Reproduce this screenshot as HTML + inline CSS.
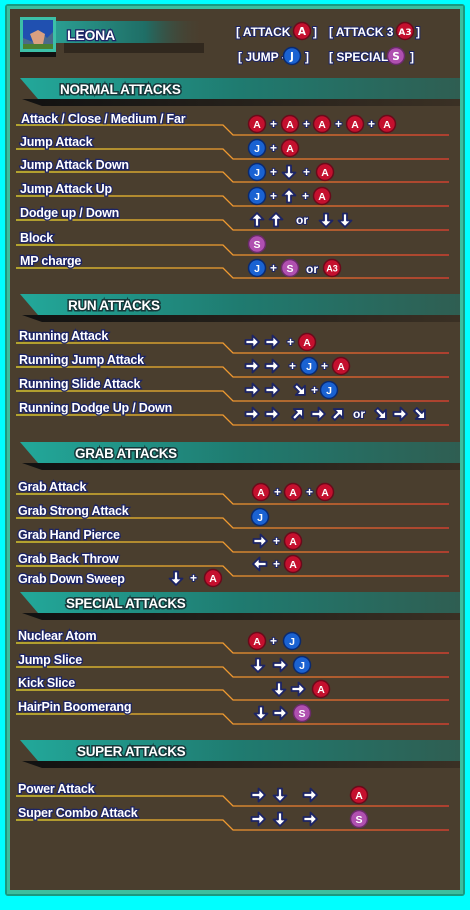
<!DOCTYPE html>
<html><head><meta charset="utf-8"><style>
html,body{margin:0;padding:0;background:#00ffff;width:470px;height:910px;overflow:hidden}
svg{display:block}
text{font-family:"Liberation Sans",sans-serif;font-weight:bold}
.l{fill:#fff;stroke:#1c2466;stroke-width:2.4px;paint-order:stroke;font-size:12.5px;letter-spacing:-0.2px}
.h{fill:#fff;stroke:#16383a;stroke-width:3px;paint-order:stroke;font-size:13.5px;letter-spacing:-0.3px}
.p{fill:#fff;stroke:#1c2466;stroke-width:2px;paint-order:stroke;font-size:12px}
.bt{fill:#fff;font-size:10.5px;text-anchor:middle;font-family:"DejaVu Sans",sans-serif}
</style></head><body>
<svg width="470" height="910" viewBox="0 0 470 910" xmlns="http://www.w3.org/2000/svg" xmlns:xlink="http://www.w3.org/1999/xlink">
<defs>
<linearGradient id="ln" x1="0" x2="1"><stop offset="0" stop-color="#f0e030"/><stop offset="0.45" stop-color="#f0a030"/><stop offset="1" stop-color="#e84030"/></linearGradient>
<linearGradient id="band" x1="0" x2="1"><stop offset="0" stop-color="#22a89a"/><stop offset="0.5" stop-color="#1f7b70"/><stop offset="1" stop-color="#2f5e52"/></linearGradient>
<linearGradient id="sh" x1="0" x2="1"><stop offset="0" stop-color="#111"/><stop offset="1" stop-color="#3a3024"/></linearGradient>
<linearGradient id="nm" x1="0" x2="1"><stop offset="0" stop-color="#2a9e92"/><stop offset="0.6" stop-color="#1f6e66"/><stop offset="1" stop-color="#4a3f2e" stop-opacity="0"/></linearGradient>
<path id="ar" d="M-6.5 -2H0.5V-6.5L7 0L0.5 6.5V2H-6.5Z" fill="#fff" stroke="#1c2466" stroke-width="1.8" stroke-linejoin="round"/>
</defs>
<rect x="5" y="4" width="460" height="892" rx="3" fill="#1a9a80"/>
<rect x="7" y="6" width="456" height="888" fill="#3cbf9e"/>
<rect x="10" y="9" width="450" height="881" fill="#4a3e2e"/>

<rect x="55" y="21" width="150" height="22" fill="url(#nm)"/>
<rect x="64" y="43" width="140" height="10" fill="#2a231a" opacity="0.8"/>
<rect x="20" y="17" width="36" height="35" fill="#3cc0a8"/>
<rect x="20" y="52" width="36" height="5" fill="#111"/>
<rect x="23" y="20" width="30" height="29" fill="#4a6a8a"/>
<path d="M23 20h30v12l-6 6-4-4-6 2-4 6-10-4z" fill="#2050b0"/>
<path d="M30 34l8-4 7 4-2 10-8 3z" fill="#d9a080"/>
<rect x="23" y="44" width="30" height="5" fill="#4a8030"/>
<text x="67" y="40" class="l" style="font-size:14px">LEONA</text>

<text x="236" y="36" class="p">[ ATTACK -</text>
<circle cx="302" cy="31" r="8.5" fill="#c4102e" stroke="#6a0a1a" stroke-width="1.5"/><text x="302" y="35" class="bt">A</text>
<text x="313" y="36" class="p">]</text>
<text x="329" y="36" class="p">[ ATTACK 3 -</text>
<circle cx="405" cy="31" r="8.5" fill="#c4102e" stroke="#6a0a1a" stroke-width="1.5"/><text x="405" y="35" class="bt" style="font-size:9px">A3</text>
<text x="416" y="36" class="p">]</text>
<text x="238" y="61" class="p">[ JUMP -</text>
<circle cx="292" cy="56" r="8.5" fill="#1a62d2" stroke="#0a2a70" stroke-width="1.5"/><text x="292" y="60" class="bt">J</text>
<text x="305" y="61" class="p">]</text>
<text x="329" y="61" class="p">[ SPECIAL -</text>
<circle cx="396" cy="56" r="8.5" fill="#b050b0" stroke="#6a2a6a" stroke-width="1.5"/><text x="396" y="60" class="bt">S</text>
<text x="410" y="61" class="p">]</text>

<g>
<path d="M22 99h438v7H42z" fill="url(#sh)"/><path d="M20 78h440v21H38z" fill="url(#band)"/><text x="60" y="94" class="h">NORMAL ATTACKS</text>
<path d="M22 315h438v7H42z" fill="url(#sh)"/><path d="M20 294h440v21H38z" fill="url(#band)"/><text x="68" y="310" class="h">RUN ATTACKS</text>
<path d="M22 463h438v7H42z" fill="url(#sh)"/><path d="M20 442h440v21H38z" fill="url(#band)"/><text x="75" y="458" class="h">GRAB  ATTACKS</text>
<path d="M22 613h438v7H42z" fill="url(#sh)"/><path d="M20 592h440v21H38z" fill="url(#band)"/><text x="66" y="608" class="h">SPECIAL  ATTACKS</text>
<path d="M22 761h438v7H42z" fill="url(#sh)"/><path d="M20 740h440v21H38z" fill="url(#band)"/><text x="77" y="756" class="h">SUPER  ATTACKS</text>
</g>

<g fill="none" stroke="url(#ln)" stroke-width="1.3">
<path d="M16 125H223l10 10H449"/><path d="M16 149H223l10 10H449"/><path d="M16 172H223l10 10H449"/><path d="M16 196H223l10 10H449"/><path d="M16 220H223l10 10H449"/><path d="M16 245H223l10 10H449"/><path d="M16 268H223l10 10H449"/>
<path d="M16 343H223l10 10H449"/><path d="M16 367H223l10 10H449"/><path d="M16 391H223l10 10H449"/><path d="M16 415H223l10 10H449"/>
<path d="M16 494H223l10 10H449"/><path d="M16 518H223l10 10H449"/><path d="M16 542H223l10 10H449"/><path d="M16 566H223l10 10H449"/>
<path d="M16 643H223l10 10H449"/><path d="M16 667H223l10 10H449"/><path d="M16 690H223l10 10H449"/><path d="M16 714H223l10 10H449"/>
<path d="M16 796H223l10 10H449"/><path d="M16 820H223l10 10H449"/>
</g>

<g>
<text x="21" y="123" class="l">Attack / Close / Medium / Far</text>
<text x="20" y="146" class="l">Jump Attack</text>
<text x="20" y="169" class="l">Jump Attack Down</text>
<text x="20" y="193" class="l">Jump Attack Up</text>
<text x="20" y="217" class="l">Dodge up  / Down</text>
<text x="20" y="242" class="l">Block</text>
<text x="20" y="265" class="l">MP charge</text>
<text x="19" y="340" class="l">Running Attack</text>
<text x="19" y="364" class="l">Running Jump Attack</text>
<text x="19" y="388" class="l">Running Slide Attack</text>
<text x="19" y="412" class="l">Running Dodge Up / Down</text>
<text x="18" y="491" class="l">Grab Attack</text>
<text x="18" y="515" class="l">Grab Strong Attack</text>
<text x="18" y="539" class="l">Grab Hand Pierce</text>
<text x="18" y="563" class="l">Grab Back Throw</text>
<text x="18" y="583" class="l">Grab Down Sweep</text>
<text x="18" y="640" class="l">Nuclear Atom</text>
<text x="18" y="664" class="l">Jump Slice</text>
<text x="18" y="687" class="l">Kick Slice</text>
<text x="18" y="711" class="l">HairPin Boomerang</text>
<text x="18" y="793" class="l">Power Attack</text>
<text x="18" y="817" class="l">Super Combo Attack</text>
</g>

<g fill="#c4102e" stroke="#6a0a1a" stroke-width="1.5">
<circle cx="257" cy="124" r="8.5"/><circle cx="290" cy="124" r="8.5"/><circle cx="322" cy="124" r="8.5"/><circle cx="355" cy="124" r="8.5"/><circle cx="387" cy="124" r="8.5"/>
<circle cx="290" cy="148" r="8.5"/><circle cx="325" cy="172" r="8.5"/><circle cx="322" cy="196" r="8.5"/><circle cx="332" cy="268" r="8.5"/>
<circle cx="307" cy="342" r="8.5"/><circle cx="341" cy="366" r="8.5"/>
<circle cx="261" cy="492" r="8.5"/><circle cx="293" cy="492" r="8.5"/><circle cx="325" cy="492" r="8.5"/>
<circle cx="293" cy="541" r="8.5"/><circle cx="293" cy="564" r="8.5"/><circle cx="213" cy="578" r="8.5"/>
<circle cx="257" cy="641" r="8.5"/><circle cx="321" cy="689" r="8.5"/><circle cx="359" cy="795" r="8.5"/>
</g>
<g fill="#1a62d2" stroke="#0a2a70" stroke-width="1.5">
<circle cx="257" cy="148" r="8.5"/><circle cx="257" cy="172" r="8.5"/><circle cx="257" cy="196" r="8.5"/><circle cx="257" cy="268" r="8.5"/>
<circle cx="309" cy="366" r="8.5"/><circle cx="329" cy="390" r="8.5"/>
<circle cx="260" cy="517" r="8.5"/><circle cx="292" cy="641" r="8.5"/><circle cx="302" cy="665" r="8.5"/>
</g>
<g fill="#b050b0" stroke="#6a2a6a" stroke-width="1.5">
<circle cx="257" cy="244" r="8.5"/><circle cx="290" cy="268" r="8.5"/><circle cx="302" cy="713" r="8.5"/><circle cx="359" cy="819" r="8.5"/>
</g>
<g class="bt">
<text x="257" y="128">A</text><text x="290" y="128">A</text><text x="322" y="128">A</text><text x="355" y="128">A</text><text x="387" y="128">A</text>
<text x="290" y="152">A</text><text x="325" y="176">A</text><text x="322" y="200">A</text><text x="332" y="271.5" style="font-size:9px">A3</text>
<text x="307" y="346">A</text><text x="341" y="370">A</text>
<text x="261" y="496">A</text><text x="293" y="496">A</text><text x="325" y="496">A</text>
<text x="293" y="545">A</text><text x="293" y="568">A</text><text x="213" y="582">A</text>
<text x="257" y="645">A</text><text x="321" y="693">A</text><text x="359" y="799">A</text>
<text x="257" y="152">J</text><text x="257" y="176">J</text><text x="257" y="200">J</text><text x="257" y="272">J</text>
<text x="309" y="370">J</text><text x="329" y="394">J</text>
<text x="260" y="521">J</text><text x="292" y="645">J</text><text x="302" y="669">J</text>
<text x="257" y="248">S</text><text x="290" y="272">S</text><text x="302" y="717">S</text><text x="359" y="823">S</text>
</g>
<g class="p">
<text x="270" y="128">+</text><text x="303" y="128">+</text><text x="335" y="128">+</text><text x="368" y="128">+</text>
<text x="270" y="152">+</text><text x="270" y="176">+</text><text x="303" y="176">+</text><text x="270" y="200">+</text><text x="302" y="200">+</text>
<text x="296" y="224">or</text><text x="270" y="272">+</text><text x="306" y="273">or</text>
<text x="287" y="346">+</text><text x="289" y="370">+</text><text x="321" y="370">+</text><text x="311" y="394">+</text><text x="353" y="418">or</text>
<text x="274" y="496">+</text><text x="306" y="496">+</text><text x="273" y="545">+</text><text x="273" y="568">+</text><text x="190" y="582">+</text>
<text x="270" y="645">+</text>
</g>
<g>
<use xlink:href="#ar" transform="translate(257 220) rotate(-90)"/><use xlink:href="#ar" transform="translate(276 220) rotate(-90)"/>
<use xlink:href="#ar" transform="translate(326 220) rotate(90)"/><use xlink:href="#ar" transform="translate(345 220) rotate(90)"/>
<use xlink:href="#ar" transform="translate(289 172) rotate(90)"/><use xlink:href="#ar" transform="translate(289 196) rotate(-90)"/>
<use xlink:href="#ar" transform="translate(252 342)"/><use xlink:href="#ar" transform="translate(272 342)"/>
<use xlink:href="#ar" transform="translate(252 366)"/><use xlink:href="#ar" transform="translate(272 366)"/>
<use xlink:href="#ar" transform="translate(252 390)"/><use xlink:href="#ar" transform="translate(272 390)"/><use xlink:href="#ar" transform="translate(300 390) rotate(45)"/>
<use xlink:href="#ar" transform="translate(252 414)"/><use xlink:href="#ar" transform="translate(272 414)"/>
<use xlink:href="#ar" transform="translate(298 414) rotate(-45)"/><use xlink:href="#ar" transform="translate(318 414)"/><use xlink:href="#ar" transform="translate(338 414) rotate(-45)"/>
<use xlink:href="#ar" transform="translate(381 414) rotate(45)"/><use xlink:href="#ar" transform="translate(400 414)"/><use xlink:href="#ar" transform="translate(420 414) rotate(45)"/>
<use xlink:href="#ar" transform="translate(260 541)"/><use xlink:href="#ar" transform="translate(260 564) rotate(180)"/><use xlink:href="#ar" transform="translate(176 578) rotate(90)"/>
<use xlink:href="#ar" transform="translate(258 665) rotate(90)"/><use xlink:href="#ar" transform="translate(280 665)"/>
<use xlink:href="#ar" transform="translate(279 689) rotate(90)"/><use xlink:href="#ar" transform="translate(298 689)"/>
<use xlink:href="#ar" transform="translate(261 713) rotate(90)"/><use xlink:href="#ar" transform="translate(280 713)"/>
<use xlink:href="#ar" transform="translate(258 795)"/><use xlink:href="#ar" transform="translate(280 795) rotate(90)"/><use xlink:href="#ar" transform="translate(310 795)"/>
<use xlink:href="#ar" transform="translate(258 819)"/><use xlink:href="#ar" transform="translate(280 819) rotate(90)"/><use xlink:href="#ar" transform="translate(310 819)"/>
</g>
</svg>
</body></html>
